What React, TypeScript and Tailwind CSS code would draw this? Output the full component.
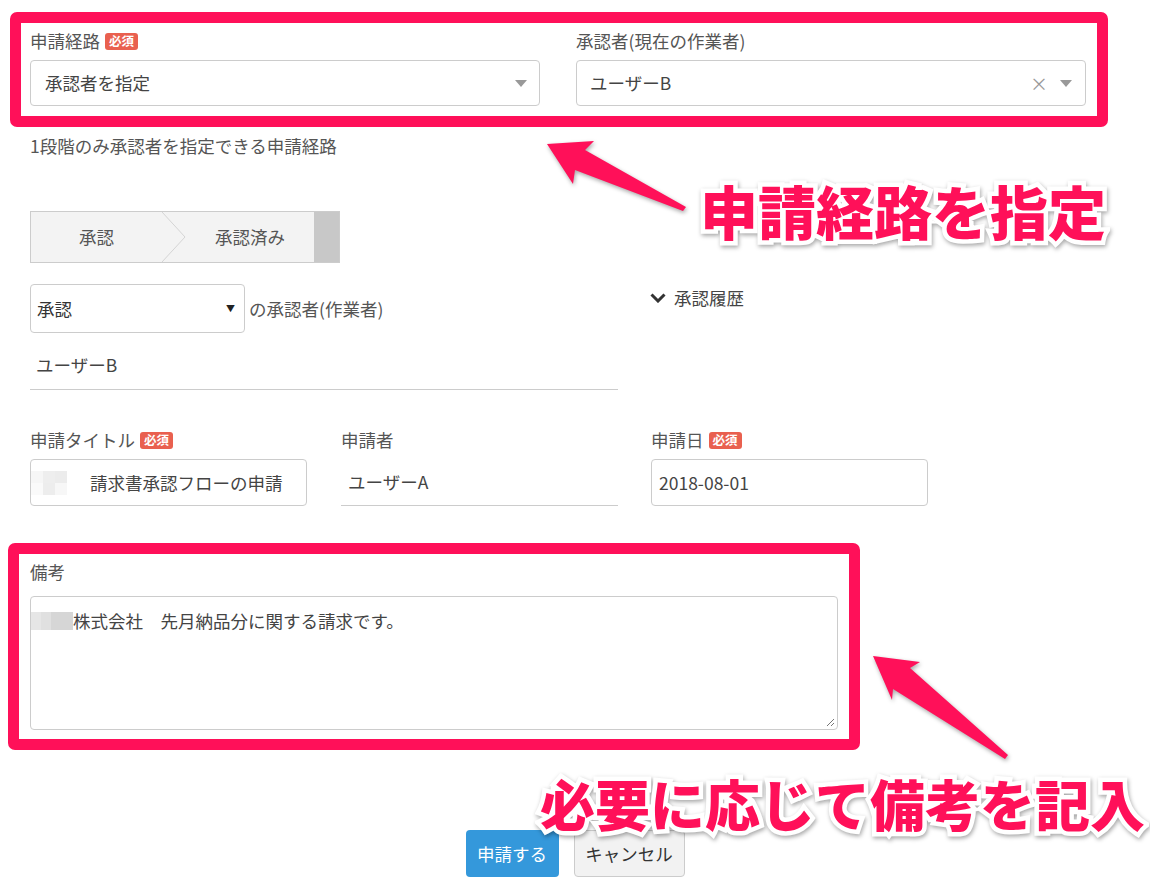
import React from 'react';

function Badge() {
  return (
    <span className="ml-[5px] inline-flex h-[17px] items-center rounded-[3px] bg-[#e9604f] px-[4px] text-[12.5px] font-bold leading-none text-white">
      必須
    </span>
  );
}

function Caret() {
  return (
    <svg width="12" height="7" viewBox="0 0 12 7">
      <path d="M0 0 L12 0 L6 7 Z" fill="#999" />
    </svg>
  );
}

export default function App() {
  const callout =
    "absolute font-black leading-none text-[#ff1059] [paint-order:stroke_fill] [-webkit-text-stroke:9px_white] [filter:drop-shadow(1px_2px_2px_rgba(0,0,0,0.35))]";

  return (
    <div className="relative h-[889px] w-[1150px] overflow-hidden bg-white font-['Noto_Sans_CJK_JP','Noto_Sans',sans-serif] text-[17.5px] leading-[26px] text-[#555]">
      {/* 申請経路 */}
      <div className="ml-[10px] mt-[12px] flex h-[115px] w-[1098px] rounded-[7px] border-[11px] border-[#ff1059] pl-[9px] pr-[11px] pt-[5px]">
        <div className="w-[510px]">
          <div className="mb-[6px] flex items-center">
            申請経路
            <Badge />
          </div>
          <div className="flex h-[46px] items-center justify-between rounded-[4px] border border-[#ccc] pl-[14px] pr-[12px] text-[#444]">
            <span>承認者を指定</span>
            <Caret />
          </div>
        </div>
        <div className="ml-[36px] w-[510px]">
          <div className="mb-[6px]">承認者(現在の作業者)</div>
          <div className="flex h-[46px] items-center rounded-[4px] border border-[#ccc] pl-[13px] pr-[13px] text-[#444]">
            <span className="flex-1">ユーザーB</span>
            <span className="mr-[12px] text-[18px] text-[#999]">×</span>
            <Caret />
          </div>
        </div>
      </div>

      <div className="ml-[30px] mt-[6px]">1段階のみ承認者を指定できる申請経路</div>

      {/* steps */}
      <div className="ml-[30px] mt-[52px] flex h-[52px] w-[310px] border border-[#ccc] bg-[#f3f3f3]">
        <div className="flex w-[131px] items-center justify-center">承認</div>
        <svg width="24" height="50" viewBox="0 0 24 50" className="shrink-0">
          <path d="M0 0 L23 25 L0 50" fill="none" stroke="#d4d4d4" strokeWidth="1" />
        </svg>
        <div className="flex flex-1 items-center justify-center">承認済み</div>
        <div className="w-[25px] bg-[#c8c8c8]" />
      </div>

      <div className="mt-[21px] flex">
        <div className="ml-[30px] w-[588px]">
          <div className="flex items-center">
            <div className="flex h-[49px] w-[215px] items-center justify-between rounded-[4px] border border-[#ccc] pl-[6px] pr-[9px] text-[#333]">
              <span>承認</span>
              <span className="text-[9px] text-[#222]">▼</span>
            </div>
            <span className="ml-[4px]">の承認者(作業者)</span>
          </div>
          <div className="mt-[7px] flex h-[50px] items-center border-b border-[#ccc] pl-[6px] text-[#444]">
            ユーザーB
          </div>
        </div>
        <div className="ml-[32px] mt-[1px] flex h-[26px] items-center">
          <svg width="16" height="10" viewBox="0 0 16 10">
            <path d="M1.5 1.5 L8 8 L14.5 1.5" fill="none" stroke="#333" strokeWidth="3" />
          </svg>
          <span className="ml-[8px] text-[#444]">承認履歴</span>
        </div>
      </div>

      {/* fields */}
      <div className="ml-[30px] mt-[37px] flex gap-[33px]">
        <div className="w-[277px]">
          <div className="mb-[6px] flex items-center">
            申請タイトル
            <Badge />
          </div>
          <div className="flex h-[47px] items-center rounded-[4px] border border-[#ccc] text-[#444]">
            <div className="flex h-[24px] w-[36px] flex-wrap">
              <div className="h-[12px] w-[12px] bg-[#f6f6f6]" />
              <div className="h-[12px] w-[12px] bg-[#eeeeee]" />
              <div className="h-[12px] w-[12px] bg-[#ececec]" />
              <div className="h-[12px] w-[12px] bg-[#fafafa]" />
              <div className="h-[12px] w-[12px] bg-[#ededed]" />
              <div className="h-[12px] w-[12px] bg-[#f7f7f7]" />
            </div>
            <span className="ml-[23px]">請求書承認フローの申請</span>
          </div>
        </div>
        <div className="ml-[1px] w-[277px]">
          <div className="mb-[6px]">申請者</div>
          <div className="flex h-[47px] items-center border-b border-[#ccc] pl-[7px] text-[#444]">ユーザーA</div>
        </div>
        <div className="w-[277px]">
          <div className="mb-[6px] flex items-center">
            申請日
            <Badge />
          </div>
          <div className="flex h-[47px] items-center rounded-[4px] border border-[#ccc] pl-[7px] text-[#444]">2018-08-01</div>
        </div>
      </div>

      {/* 備考 */}
      <div className="ml-[8px] mt-[37px] h-[207px] w-[852px] rounded-[7px] border-[11px] border-[#ff1059] px-[11px] pt-[5px]">
        <div className="mb-[11px]">備考</div>
        <div className="relative h-[134px] rounded-[4px] border border-[#ccc] pt-[11px] text-[#444]">
          <div className="flex items-center">
            <div className="flex h-[18px] w-[42px]">
              <div className="w-[10px] bg-[#e6e6e6]" />
              <div className="w-[10px] bg-[#e0e0e0]" />
              <div className="w-[22px] bg-[#d6d6d6]" />
            </div>
            <span>株式会社　先月納品分に関する請求です。</span>
          </div>
          <svg width="9" height="9" viewBox="0 0 9 9" className="absolute bottom-[2px] right-[2px]">
            <path d="M8 1 L1 8 M8 5 L5 8" stroke="#777" strokeWidth="1" />
          </svg>
        </div>
      </div>

      <div className="mt-[80px] flex justify-center gap-[15px]">
        <button className="h-[47px] w-[93px] rounded-[4px] bg-[#3498db] text-white">申請する</button>
        <button className="h-[47px] w-[111px] rounded-[4px] border border-[#ccc] bg-[#f2f2f2] text-[#333]">キャンセル</button>
      </div>

      {/* annotations */}
      <svg width="1150" height="889" className="pointer-events-none absolute left-0 top-0 [filter:drop-shadow(1px_2px_2px_rgba(0,0,0,0.35))]">
        <polygon points="547,144 594,141 585,150 686,207 683,211 575,170 573,184" fill="#ff1059" />
        <polygon points="873,656 920,662 910,668 1008,755 1005,759 893,689 892,700" fill="#ff1059" />
      </svg>
      <div className={callout + " left-[700px] top-[181px] text-[58px]"}>申請経路を指定</div>
      <div className={callout + " left-[540px] top-[775px] text-[55px]"}>必要に応じて備考を記入</div>
    </div>
  );
}
